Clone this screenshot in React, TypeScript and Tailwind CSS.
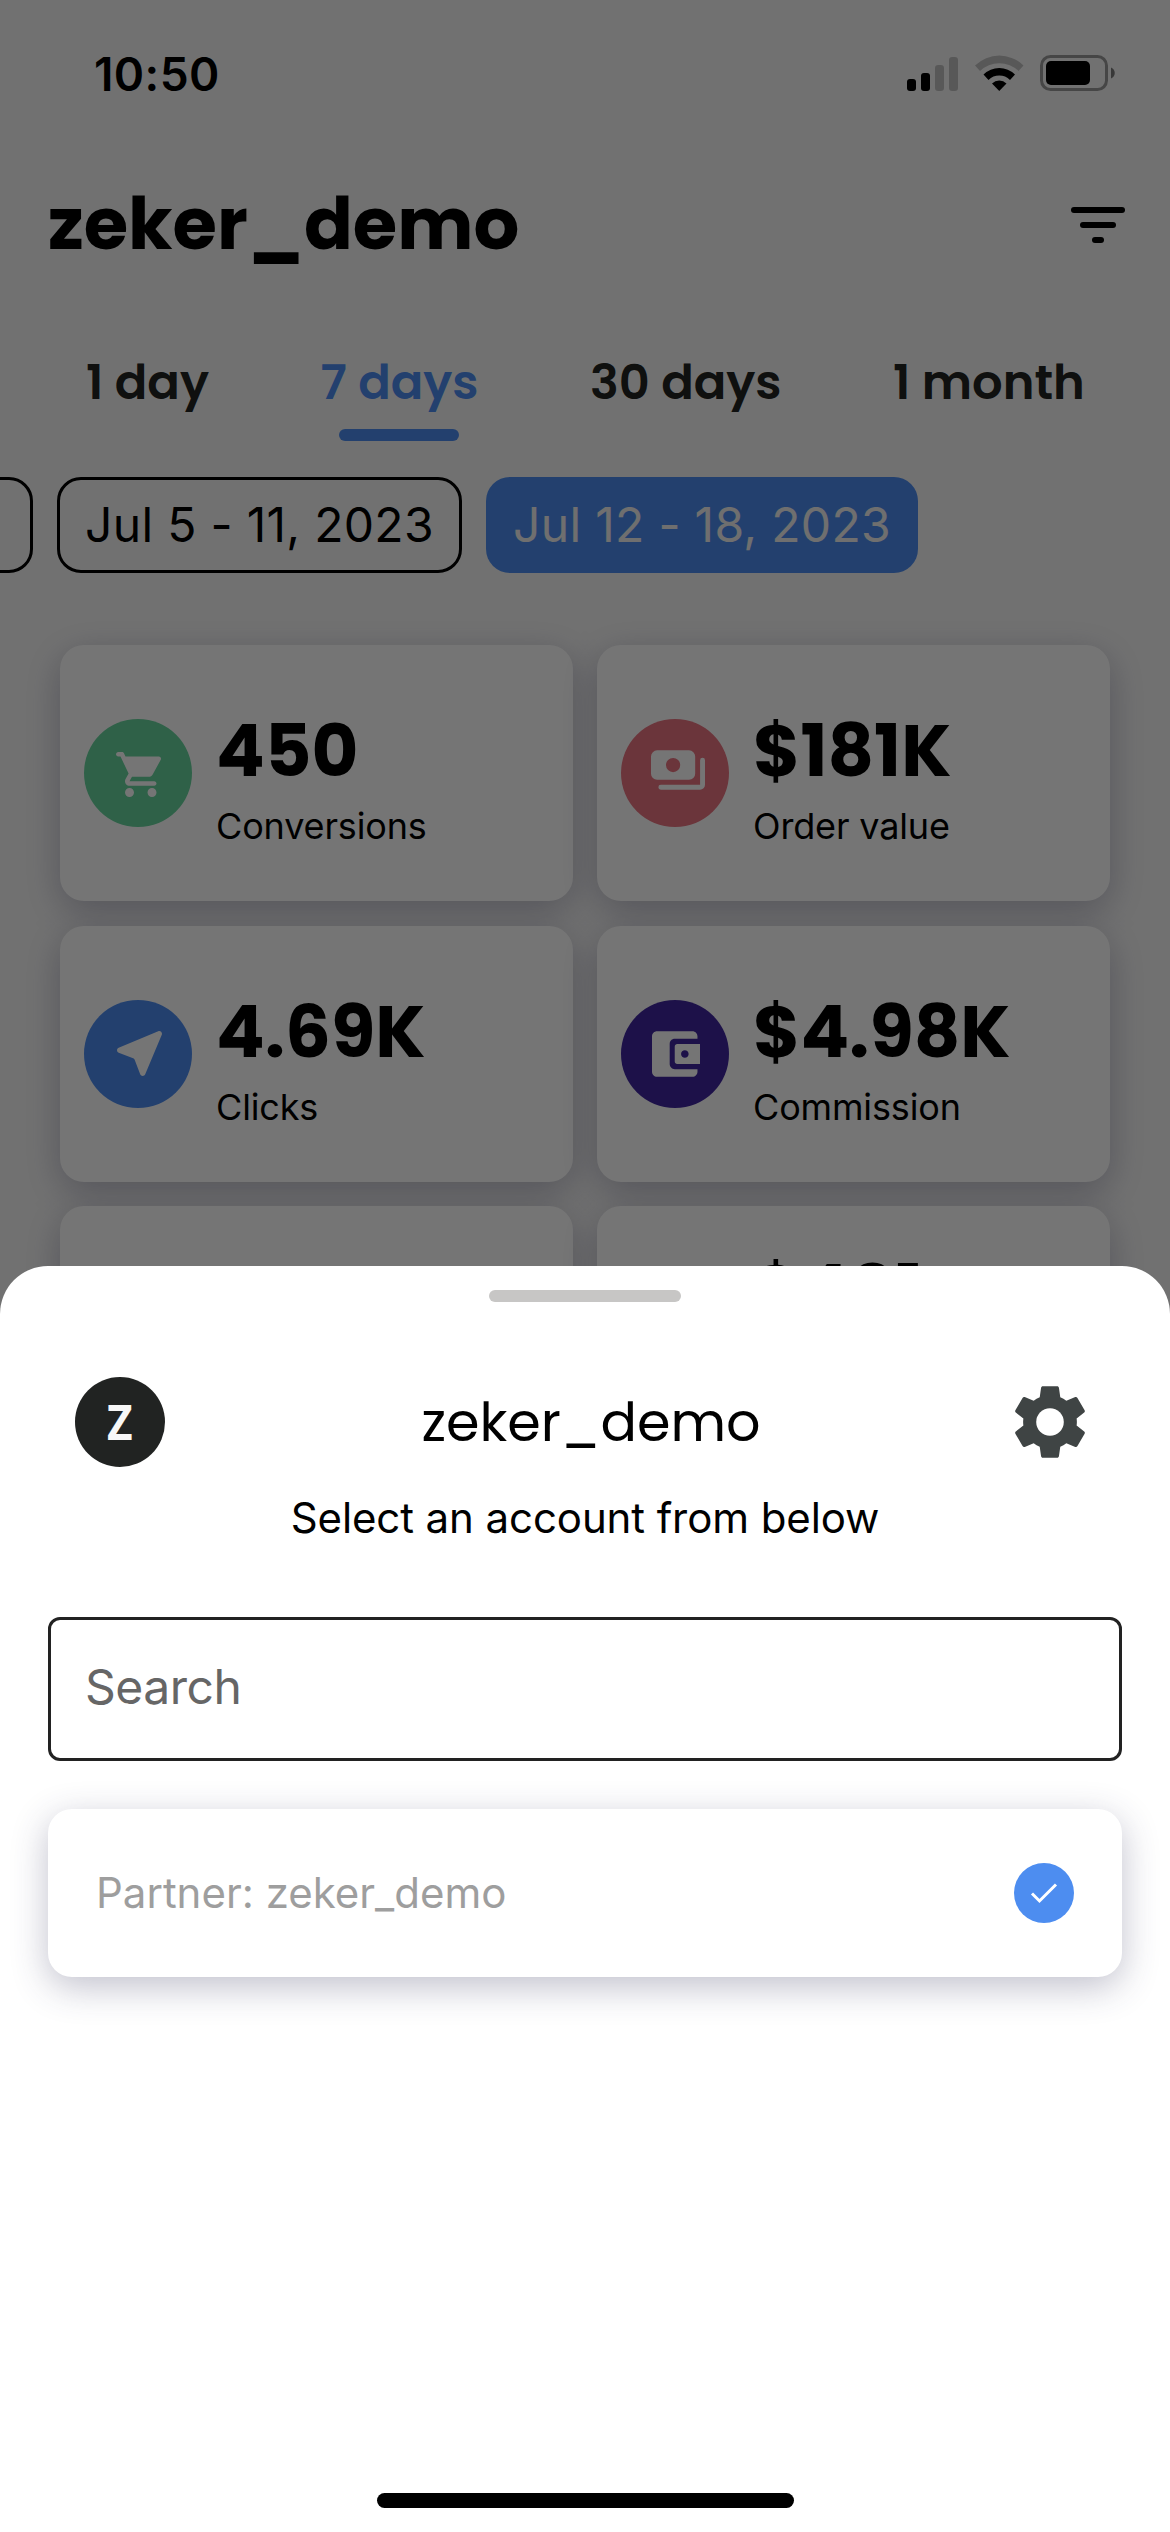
import type { ReactNode } from 'react';

const tabs = ['1 day', '7 days', '30 days', '1 month'];

const activeTab = '7 days';

function StatusBar() {
  return (
    <div className="flex h-[147px] items-start justify-between pl-[94px] pr-[53px] pt-[46px]">
      <span className="text-[46px] leading-[57px] font-semibold tracking-[0.4px]">10:50</span>
      <div className="flex items-start gap-[15px] pt-[7px]">
        <svg width="53" height="40" viewBox="0 0 53 40">
          <rect x="0" y="26" width="9" height="12" rx="3" />
          <rect x="14" y="20" width="9" height="18" rx="3" />
          <rect x="28" y="12" width="9" height="26" rx="3" opacity=".22" />
          <rect x="42" y="4" width="9" height="34" rx="3" opacity=".22" />
        </svg>
        <svg width="50" height="40" viewBox="0 0 50 40">
          <path d="M0 12.5A34.5 34.5 0 0 1 48.5 12.5L43.5 18A27.5 27.5 0 0 0 5 18Z" opacity=".22" />
          <path d="M8.5 21.5A22.5 22.5 0 0 1 40 21.5L35 27A15.3 15.3 0 0 0 13.5 27Z" />
          <path d="M17 30.5A10.5 10.5 0 0 1 31.5 30.5L24.25 38Z" />
        </svg>
        <svg width="77" height="40" viewBox="0 0 77 40">
          <rect x="1.5" y="3.5" width="65" height="33" rx="9" fill="none" stroke="#000" strokeWidth="3" opacity=".38" />
          <rect x="6" y="8" width="44" height="24" rx="5" />
          <path d="M71 14.5c5 2 5 9 0 11Z" opacity=".5" />
        </svg>
      </div>
    </div>
  );
}

function StatCard({ value, label, color, children }: {
  value: string;
  label: string;
  color: string;
  children?: ReactNode;
}) {
  return (
    <div className="flex items-center rounded-[24px] bg-white pl-6 shadow-[0_10px_36px_rgba(50,50,90,0.3)]">
      <div className={`flex size-[108px] shrink-0 items-center justify-center rounded-full ${color}`}>{children}</div>
      <div className="ml-6 pt-1.5">
        <div className="font-['Poppins',sans-serif] text-[72px] leading-[92px] font-bold whitespace-nowrap">{value}</div>
        <div className="mt-2 w-[300px] text-[36px] leading-[42px] tracking-[-0.15px]">{label}</div>
      </div>
    </div>
  );
}

export default function App() {
  return (
    <div className="relative h-[2532px] w-[1170px] overflow-hidden bg-[#f7f7f7] font-['Inter',sans-serif] text-black">
      <StatusBar />

      {/* Header */}
      <div className="flex h-[156px] items-center justify-between pl-12 pr-[45px]">
        <h1 className="pb-0.5 font-['Poppins',sans-serif] text-[72px] leading-none font-bold">zeker_demo</h1>
        <div className="flex w-[54px] flex-col items-center gap-[9px]">
          <span className="h-1.5 w-[54px] rounded-full bg-black" />
          <span className="h-1.5 w-9 rounded-full bg-black" />
          <span className="h-1.5 w-3 rounded-full bg-black" />
        </div>
      </div>

      {/* Period tabs */}
      <div className="flex h-[174px] gap-[111.5px] pt-[49px] pl-[86px]">
        {tabs.map((tab) => (
          <div key={tab} className="flex flex-col items-center">
            <span className={`font-['Poppins',sans-serif] text-[48px] leading-[62px] font-semibold whitespace-nowrap ${tab === activeTab ? 'text-[#4d8df0]' : 'text-[#212322]'}`}>
              {tab}
            </span>
            {tab === activeTab && <span className="mt-[15px] h-3 w-30 rounded-full bg-[#4d8df0]" />}
          </div>
        ))}
      </div>

      {/* Date ranges, scrolled to the end */}
      <div className="flex h-24 w-[918px] justify-end gap-6 text-[48px] leading-none tracking-[0.3px] whitespace-nowrap">
        <div className="w-[405px] shrink-0 rounded-[24px] border-3 border-black" />
        <div className="flex w-[405px] shrink-0 items-center justify-center rounded-[24px] border-3 border-black">Jul 5 - 11, 2023</div>
        <div className="flex w-[432px] shrink-0 items-center justify-center rounded-[24px] bg-[#4d8df0] text-[#f2f2f2]">Jul 12 - 18, 2023</div>
      </div>

      {/* Stats */}
      <div className="mx-[60px] mt-[72px] grid auto-rows-[256px] grid-cols-2 gap-x-6 gap-y-[24.5px]">
        <StatCard value="450" label="Conversions" color="bg-[#66d39d]">
          <svg width="45" height="45" viewBox="1 2 20 20" fill="#fff" className="mt-[3px]">
            <path d="M7 18c-1.1 0-1.99.9-1.99 2S5.9 22 7 22s2-.9 2-2-.9-2-2-2zM1 3c0 .55.45 1 1 1h1l3.6 7.59-1.35 2.44C4.52 15.37 5.48 17 7 17h11c.55 0 1-.45 1-1s-.45-1-1-1H7l1.1-2h7.45c.75 0 1.41-.41 1.75-1.03l3.58-6.49c.37-.66-.11-1.48-.87-1.48H5.21l-.67-1.43c-.16-.35-.52-.57-.9-.57H2c-.55 0-1 .45-1 1zm16 15c-1.1 0-1.99.9-1.99 2s.89 2 1.99 2 2-.9 2-2-.9-2-2-2z" />
          </svg>
        </StatCard>
        <StatCard value="$181K" label="Order value" color="bg-[#e97380]">
          <svg width="54" height="40" viewBox="1 4 22 16" fill="#fff" className="mb-[7px] ml-[6px]">
            <path fillRule="evenodd" d="M3.5 4h13A2.5 2.5 0 0 1 19 6.5v7a2.5 2.5 0 0 1-2.5 2.5h-13A2.5 2.5 0 0 1 1 13.5v-7A2.5 2.5 0 0 1 3.5 4zM10 7.1a2.9 2.9 0 1 0 0 5.8 2.9 2.9 0 0 0 0-5.8z" />
            <path d="M22 8v10a1 1 0 0 1-1 1H5" fill="none" stroke="#fff" strokeWidth="2" strokeLinecap="round" />
          </svg>
        </StatCard>
        <StatCard value="4.69K" label="Clicks" color="bg-[#4d8df0]">
          <svg width="45" height="45" viewBox="3.45 3.86 16.7 16.7" fill="#fff" className="ml-[2px]">
            <path d="M18.75 3.94L4.07 10.08c-.83.35-.81 1.53.02 1.85L9.43 14c.26.1.47.31.57.57l2.06 5.33c.32.84 1.51.86 1.86.03l6.15-14.67c.33-.83-.5-1.66-1.32-1.32z" />
          </svg>
        </StatCard>
        <StatCard value="$4.98K" label="Commission" color="bg-[#3f279f]">
          <svg width="48" height="46" viewBox="3 3 19 18" fill="#fff" className="ml-[2px]">
            <path d="M10 16V8c0-1.1.89-2 2-2h9V5c0-1.1-.9-2-2-2H5c-1.11 0-2 .9-2 2v14c0 1.1.89 2 2 2h14c1.1 0 2-.9 2-2v-1h-9c-1.11 0-2-.9-2-2zm3-8c-.55 0-1 .45-1 1v6c0 .55.45 1 1 1h9V8h-9zm3 5.5c-.83 0-1.5-.67-1.5-1.5s.67-1.5 1.5-1.5 1.5.67 1.5 1.5-.67 1.5-1.5 1.5z" />
          </svg>
        </StatCard>
        <StatCard value="9.6%" label="Conversion" color="bg-[#66d39d]" />
        <StatCard value="$401" label="Average order value" color="bg-[#e97380]" />
      </div>

      {/* Backdrop */}
      <div className="absolute inset-0 bg-black/54" />

      {/* Account sheet */}
      <div className="absolute inset-x-0 bottom-0 flex h-[1266px] flex-col items-center rounded-t-[48px] bg-white pt-6">
        <div className="h-3 w-48 shrink-0 rounded-full bg-[#c7c6c5]" />
        <div className="mt-[75px] flex h-[90px] w-full items-center justify-between pl-[75px] pr-[77px]">
          <div className="flex size-[90px] items-center justify-center rounded-full bg-[#212322] font-['Open_Sans',sans-serif] text-[48px] leading-none font-bold text-[#f7f7f7]">
            <span className="scale-x-92">Z</span>
          </div>
          <h2 className="ml-[10px] font-['Poppins',sans-serif] text-[54px] leading-none">zeker_demo</h2>
          <svg width="86" height="86" viewBox="0 0 24 24" fill="#3f4444">
            <path d="M19.43 12.98c.04-.32.07-.64.07-.98s-.03-.66-.07-.98l2.11-1.65c.19-.15.24-.42.12-.64l-2-3.46c-.12-.22-.39-.3-.61-.22l-2.49 1c-.52-.4-1.08-.73-1.69-.98l-.38-2.65C14.46 2.18 14.25 2 14 2h-4c-.25 0-.46.18-.49.42l-.38 2.65c-.61.25-1.17.59-1.69.98l-2.49-1c-.23-.09-.49 0-.61.22l-2 3.46c-.13.22-.07.49.12.64l2.11 1.65c-.04.32-.07.65-.07.98s.03.66.07.98l-2.11 1.65c-.19.15-.24.42-.12.64l2 3.46c.12.22.39.3.61.22l2.49-1c.52.4 1.08.73 1.69.98l.38 2.65c.03.24.24.42.49.42h4c.25 0 .46-.18.49-.42l.38-2.65c.61-.25 1.17-.59 1.69-.98l2.49 1c.23.09.49 0 .61-.22l2-3.46c.12-.22.07-.49-.12-.64l-2.11-1.65z" />
            <circle cx="12" cy="12" r="3.85" fill="#fff" />
          </svg>
        </div>
        <p className="mt-[24px] text-[42px] leading-[54px] tracking-[-0.1px] whitespace-nowrap">Select an account from below</p>
        <div className="mt-[72px] flex h-36 w-[1074px] shrink-0 items-center rounded-[12px] border-3 border-[#222] pb-[4px] pl-[34px] text-[48px] leading-none tracking-[-0.5px] text-[#666]">Search</div>
        <div className="mt-12 flex h-[168px] w-[1074px] shrink-0 items-center justify-between rounded-[24px] bg-white px-12 text-[42px] leading-none text-[#9e9e9e] shadow-[0_10px_36px_rgba(50,50,90,0.3)]">
          <span>Partner: zeker_demo</span>
          <span className="flex size-[60px] items-center justify-center rounded-full bg-[#4d8df0]">
            <svg width="30" height="24" viewBox="0 0 30 24" fill="none" stroke="#fff" strokeWidth="3">
              <path d="M3 12.5l7.5 7.5L27 3.5" />
            </svg>
          </span>
        </div>
        <div className="mt-auto mb-6 h-[15px] w-[417px] shrink-0 rounded-full bg-black" />
      </div>
    </div>
  );
}
